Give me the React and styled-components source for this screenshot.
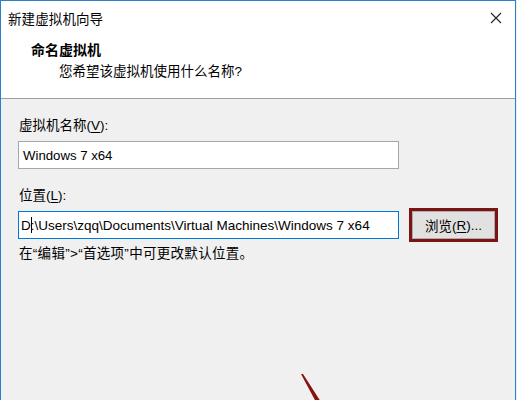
import React from 'react';
import styled, { createGlobalStyle } from 'styled-components';

const GlobalStyle = createGlobalStyle`
  html, body {
    margin: 0;
    padding: 0;
    background: #f0f0f0;
  }
  body {
    font-family: "Liberation Sans", "Noto Sans CJK SC", sans-serif;
    color: #000;
  }
`;

const Window = styled.div`
  position: relative;
  width: 516px;
  height: 400px;
  box-sizing: border-box;
  border: 1px solid #2f7fc8;
  border-bottom: none;
  background: #f0f0f0;
  overflow: hidden;
  display: flex;
  flex-direction: column;
`;

const TitleBar = styled.div`
  height: 33px;
  background: #fff;
  display: flex;
  align-items: center;
  justify-content: space-between;
  padding: 0 13px 0 7px;
`;

const Title = styled.span`
  font-size: 13.5px;
  letter-spacing: 0.1px;
`;

const CloseButton = styled.div`
  width: 12px;
  height: 12px;
  display: flex;
`;

const Header = styled.div`
  background: #fff;
  height: 65px;
  border-bottom: 1px solid #a0a0a0;
  padding: 7px 0 0 30px;
  box-sizing: border-box;
  display: flex;
  flex-direction: column;
  gap: 4px;
`;

const HeaderTitle = styled.div`
  font-size: 14px;
  line-height: 18px;
  font-weight: 700;
`;

const HeaderSub = styled.div`
  font-size: 13.5px;
  line-height: 18px;
  padding-left: 28px;
`;

const Body = styled.div`
  flex: 1;
  padding: 18px 0 0 17px;
  display: flex;
  flex-direction: column;
`;

const Label = styled.div`
  font-size: 13.5px;
  line-height: 18px;
  margin-left: 1px;
  margin-bottom: ${p => p.gap}px;
`;

const Key = styled.span`
  text-decoration: underline;
  text-underline-offset: 2px;
`;

const Row = styled.div`
  display: flex;
  align-items: center;
  gap: 10px;
`;

const Field = styled.div`
  width: 381px;
  height: 28px;
  box-sizing: border-box;
  background: #fff;
  border: 1px solid ${p => (p.focused ? '#0078d7' : '#a6a6a6')};
  font-size: ${p => p.size || 13}px;
  display: flex;
  align-items: center;
  padding-left: ${p => p.pad || 4}px;
  white-space: nowrap;
  overflow: hidden;
`;

const Caret = styled.span`
  display: inline-block;
  width: 1px;
  height: 16px;
  background: #000;
  margin: 0 -1px 0 0;
`;

const BrowseButton = styled.div`
  width: 89px;
  height: 34px;
  box-sizing: border-box;
  border: 3px solid #7b1414;
  background: #e1e1e1;
  display: flex;
  align-items: center;
  justify-content: center;
  font-size: 13.5px;
  box-shadow: inset 0 0 0 1px #adadad;
`;

const Hint = styled.div`
  font-size: 13.5px;
  line-height: 18px;
  margin-top: 3px;
  margin-left: 1px;
  letter-spacing: 0.3px;
`;

const Spacer = styled.div`
  height: ${p => p.h}px;
`;

const Arrow = styled.svg`
  position: absolute;
  left: 296px;
  top: 370px;
`;

export default function App() {
  return (
    <>
      <GlobalStyle />
      <Window>
        <TitleBar>
          <Title>新建虚拟机向导</Title>
          <CloseButton>
            <svg width="12" height="12" viewBox="0 0 12 12">
              <path d="M1 1 L11 11 M11 1 L1 11" stroke="#222" strokeWidth="1.1" />
            </svg>
          </CloseButton>
        </TitleBar>
        <Header>
          <HeaderTitle>命名虚拟机</HeaderTitle>
          <HeaderSub>您希望该虚拟机使用什么名称?</HeaderSub>
        </Header>
        <Body>
          <Label gap={6}>虚拟机名称(<Key>V</Key>):</Label>
          <Field size={13.2}>Windows 7 x64</Field>
          <Spacer h={18} />
          <Label gap={3}>位置(<Key>L</Key>):</Label>
          <Row>
            <Field focused pad={2} size={13.5}>
              D<Caret />:\Users\zqq\Documents\Virtual Machines\Windows 7 x64
            </Field>
            <BrowseButton>浏览(<Key>R</Key>)...</BrowseButton>
          </Row>
          <Hint>在“编辑”&gt;“首选项”中可更改默认位置。</Hint>
        </Body>
        <Arrow width="30" height="32" viewBox="0 0 30 32">
          <polygon points="4,3 6,3 24,31 19,31" fill="#8a0f0f" />
        </Arrow>
      </Window>
    </>
  );
}
